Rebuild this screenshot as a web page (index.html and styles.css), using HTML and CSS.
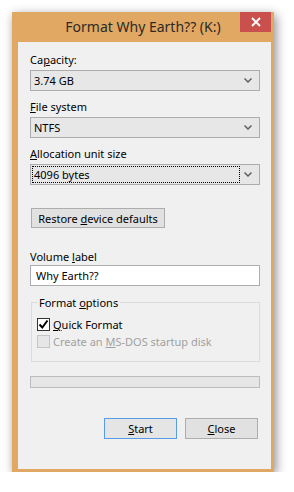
FILE: index.html
```html
<!DOCTYPE html>
<html lang="en">
<head>
    <meta charset="UTF-8">
    <meta name="viewport" content="width=device-width, initial-scale=1.0">
    <title>Format Why Earth?? (K:)</title>
    <link rel="stylesheet" href="styles.css">
</head>
<body>

    <div class="window">
        <div class="titlebar">
            <span class="title">Format Why Earth?? (K:)</span>
            <span class="close-btn">
                <svg width="10" height="10" viewBox="0 0 10 10"><path d="M1 1 L9 9 M9 1 L1 9" stroke="#fff" stroke-width="1.8"/></svg>
            </span>
        </div>

        <div class="client">
            <label class="label label-first">Ca<u>p</u>acity:</label>
            <div class="combo">
                <span class="combo-value">3.74 GB</span>
                <svg class="chevron" width="8" height="5" viewBox="0 0 8 5"><path d="M0.5 0.5 L4 4 L7.5 0.5" fill="none" stroke="#606060" stroke-width="1.5"/></svg>
            </div>

            <label class="label"><u>F</u>ile system</label>
            <div class="combo">
                <span class="combo-value">NTFS</span>
                <svg class="chevron" width="8" height="5" viewBox="0 0 8 5"><path d="M0.5 0.5 L4 4 L7.5 0.5" fill="none" stroke="#606060" stroke-width="1.5"/></svg>
            </div>

            <label class="label"><u>A</u>llocation unit size</label>
            <div class="combo">
                <span class="combo-value focused">4096 bytes</span>
                <svg class="chevron" width="8" height="5" viewBox="0 0 8 5"><path d="M0.5 0.5 L4 4 L7.5 0.5" fill="none" stroke="#606060" stroke-width="1.5"/></svg>
            </div>

            <button class="btn btn-restore">Restore <u>d</u>evice defaults</button>

            <label class="label label-volume">Volume <u>l</u>abel</label>
            <div class="textbox">Why Earth??</div>

            <fieldset class="options">
                <legend>Format <u>o</u>ptions</legend>
                <div class="check-row first-row">
                    <span class="checkbox checked">
                        <svg width="11" height="11" viewBox="0 0 11 11"><path d="M1.5 5.5 L4.3 8.5 L9.5 1.5" fill="none" stroke="#000" stroke-width="2"/></svg>
                    </span>
                    <span><u>Q</u>uick Format</span>
                </div>
                <div class="check-row disabled">
                    <span class="checkbox"></span>
                    <span>Create an <u>M</u>S-DOS startup disk</span>
                </div>
            </fieldset>

            <div class="progress"></div>

            <div class="actions">
                <button class="btn btn-default"><u>S</u>tart</button>
                <button class="btn"><u>C</u>lose</button>
            </div>
        </div>
    </div>

</body>
</html>
```

FILE: styles.css
```css
body {
    margin: 0;
    background-color: #fff;
    font-family: "Noto Sans", "Open Sans", sans-serif;
    font-size: 11px;
    color: #000;
}
.window {
    margin: 12px 0 0 12px;
    width: 253px;
    background-color: #e0a862;
    border-left: 6px solid #e0a862;
    border-right: 3px solid #e0a862;
    border-bottom: 3px solid #e0a862;
    box-shadow: 2px 3px 10px rgba(0, 0, 0, 0.45);
}
.titlebar {
    position: relative;
    height: 30px;
    line-height: 30px;
    text-align: center;
    margin-left: -6px;
    margin-right: -3px;
}
.title {
    font-size: 14px;
    color: #2d2a26;
}
.close-btn {
    position: absolute;
    top: 0;
    right: 3px;
    width: 31px;
    height: 20px;
    background-color: #c9504c;
    display: flex;
    align-items: center;
    justify-content: center;
}
.close-btn svg {
    display: block;
}
.client {
    background-color: #f0f0f0;
    padding: 10px 11px 30px 12px;
}
.label {
    display: block;
    line-height: 15px;
    margin: 8px 0 3px;
}
.label-first {
    margin-top: 0;
}
.combo {
    height: 19px;
    border: 1px solid #acacac;
    background-color: #e7e7e7;
    display: flex;
    align-items: center;
    justify-content: space-between;
    padding-left: 3px;
    padding-right: 7px;
}
.combo-value {
    line-height: 15px;
}
.combo-value.focused {
    margin-left: -1px;
    padding-left: 1px;
    width: 205px;
    outline: 1px dotted #000;
}
.chevron {
    display: block;
}
.btn {
    font-family: inherit;
    font-size: 11px;
    color: #000;
    background-color: #e1e1e1;
    border: 1px solid #adadad;
    height: 21px;
    padding: 0;
    line-height: 17px;
}
.btn-restore {
    display: block;
    margin: 23px 0 0 1px;
    width: 134px;
    height: 20px;
}
.label-volume {
    margin-top: 21px;
    margin-bottom: 1px;
}
.textbox {
    height: 19px;
    line-height: 19px;
    border: 1px solid #abadb3;
    background-color: #fff;
    padding-left: 5px;
}
.options {
    margin: 9px 0 0 1px;
    padding: 0 5px 11px 5px;
    border: 1px solid #dcdcdc;
}
.options legend {
    padding: 0 2px;
    line-height: 15px;
}
.check-row {
    display: flex;
    align-items: center;
    gap: 3px;
    height: 17px;
}
.first-row {
    margin-top: 6px;
}
.checkbox {
    width: 11px;
    height: 11px;
    border: 1px solid #333;
    background-color: #fff;
    display: flex;
    align-items: center;
    justify-content: center;
}
.checkbox svg {
    display: block;
}
.disabled {
    color: #a0a0a0;
}
.disabled .checkbox {
    border-color: #c5c5c5;
    background-color: #e6e6e6;
}
.progress {
    margin-top: 14px;
    height: 10px;
    border: 1px solid #bcbcbc;
    background-color: #e6e6e6;
}
.actions {
    display: flex;
    justify-content: flex-end;
    gap: 8px;
    margin-top: 30px;
    padding-right: 2px;
}
.actions .btn {
    width: 73px;
}
.btn-default {
    border-color: #569de5;
    background-color: #e5e5e5;
}
```
